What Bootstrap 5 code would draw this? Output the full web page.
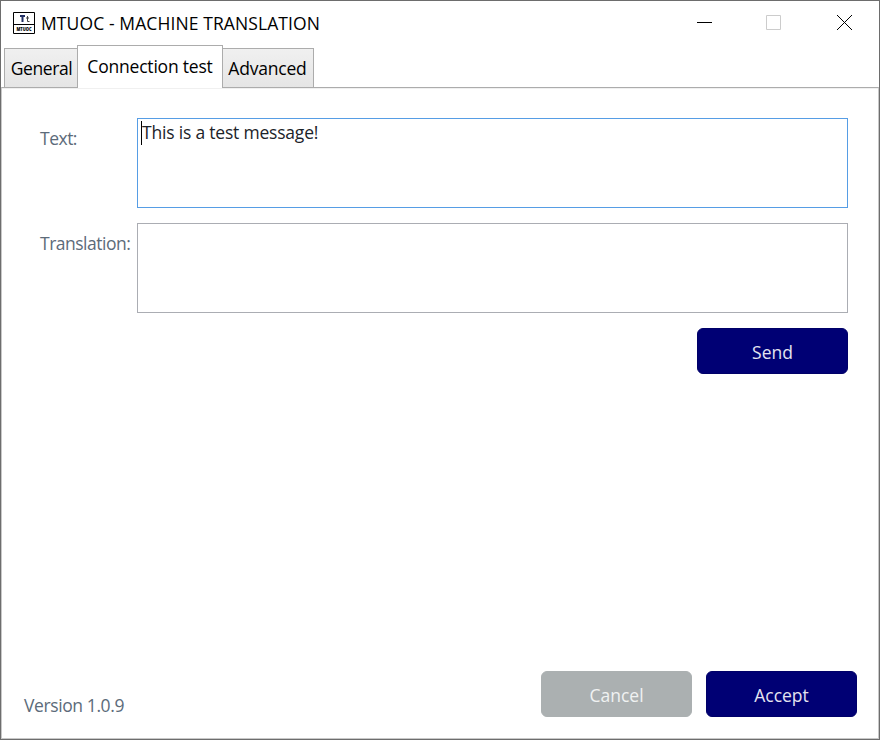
<!DOCTYPE html>
<html lang="en">
<head>
<meta charset="utf-8">
<meta name="viewport" content="width=device-width, initial-scale=1">
<title>MTUOC - MACHINE TRANSLATION</title>
<link rel="stylesheet" href="https://cdn.jsdelivr.net/npm/bootstrap@5.3.0/dist/css/bootstrap.min.css">
<style>
body{font-family:"Open Sans","Noto Sans",sans-serif;font-size:17.5px;line-height:24px;letter-spacing:-.2px;color:#000;background:#fff}
.window{width:880px;height:740px;border:1px solid #6d6d6d}
.titlebar{height:44px;padding:0 26px 0 12px}
.app-icon{overflow:visible}
.caption{margin-left:6px;letter-spacing:.1px;margin-top:-1px}
.window-controls{gap:54px}
.tabs{height:42px;padding-left:3px;border:0}
.tabs .nav-link{height:40px;padding:0;border:1px solid #acacac;border-bottom:0;border-radius:0;background:linear-gradient(#f0f0f0,#e5e5e5);color:#000;text-align:center;line-height:39px;white-space:nowrap}
.tabs .nav-link.active{height:43px;margin:0 -1px -1px;background:#fff;border-color:#acacac;color:#000;line-height:41px;z-index:1;position:relative}
.tabs .tab-general{width:74px;padding-left:1px;letter-spacing:-.4px}
.tabs .tab-connection{width:146px}
.tabs .tab-advanced{width:92px;padding-right:1px}
.pane{border:1px solid #acacac;border-left-color:#c8c8c8;border-right-color:#c8c8c8;border-bottom-color:#c8c8c8;padding:30px 30px 21px 38px;box-shadow:inset 0 1px #f0f0f0}
.field{margin-bottom:15px}
.field-label{width:97px;padding-top:8px;color:#5c6b7a;letter-spacing:-.5px;white-space:nowrap}
.field-box{height:90px;border:1px solid #abadb3;border-radius:0;padding:1px 3px;font-size:inherit;line-height:25px;color:#1c2329;box-shadow:none;transition:none}
.field-box.focused{border-color:#569de5}
.caret{display:inline-block;width:1px;height:24px;margin-top:1px;background:#000;vertical-align:top}
.action{width:151px;height:46px;padding:2px 0 0;border-radius:6px;border:1px solid #000068;background:#000074;color:#e4e4f0;font-size:17.5px;transition:none}
.action.cancel{background:#abb0b1;border-color:#abb0b1;color:#f0f2f2}
.footer{margin-left:-16px;margin-right:-9px;gap:14px}
.version{color:#5c6b7a;letter-spacing:-.4px}
</style>
<script src="https://cdn.jsdelivr.net/npm/bootstrap@5.3.0/dist/js/bootstrap.bundle.min.js"></script>
</head>
<body>
<div class="window d-flex flex-column overflow-hidden">
  <header class="titlebar d-flex align-items-center justify-content-between">
    <div class="d-flex align-items-center">
      <svg class="app-icon" width="22" height="22" viewBox="0 0 22 22"><path d="M.5.5h21v21H.5zM0 12.5h22" fill="#fff" stroke="#000"/><path d="M7 4h5M9.5 4v6" stroke="#223064" stroke-width="2" fill="none"/><path d="M14.5 4v5.5h2M13 6h3" stroke="#444" fill="none"/><text x="3.5" y="19" font-size="5" font-weight="800" letter-spacing="0" textLength="15" lengthAdjust="spacingAndGlyphs">MTUOC</text></svg>
      <span class="caption">MTUOC - MACHINE TRANSLATION</span>
    </div>
    <div class="window-controls d-flex align-items-center">
      <svg width="15" height="16"><path d="M0 7.5h15" stroke="#000"/></svg>
      <svg width="17" height="16"><path d="M.5.5h14v14H.5z" fill="none" stroke="#ccc"/></svg>
      <svg width="16" height="16"><path d="M0 0l15 15m0-15l-15 15" stroke="#000"/></svg>
    </div>
  </header>
  <nav class="tabs nav nav-tabs flex-nowrap align-items-end">
    <a class="nav-link tab-general">General</a>
    <a class="nav-link tab-connection active">Connection test</a>
    <a class="nav-link tab-advanced">Advanced</a>
  </nav>
  <main class="pane flex-grow-1 d-flex flex-column">
    <div class="field d-flex"><label class="field-label flex-shrink-0">Text:</label><div class="field-box focused form-control"><span class="caret"></span>This is a test message!</div></div>
    <div class="field d-flex"><label class="field-label flex-shrink-0">Translation:</label><div class="field-box form-control"></div></div>
    <div class="d-flex justify-content-end"><button class="action btn">Send</button></div>
    <div class="footer d-flex align-items-end mt-auto"><span class="version">Version 1.0.9</span><button class="action cancel btn ms-auto">Cancel</button><button class="action btn">Accept</button></div>
  </main>
</div>
</body>
</html>
